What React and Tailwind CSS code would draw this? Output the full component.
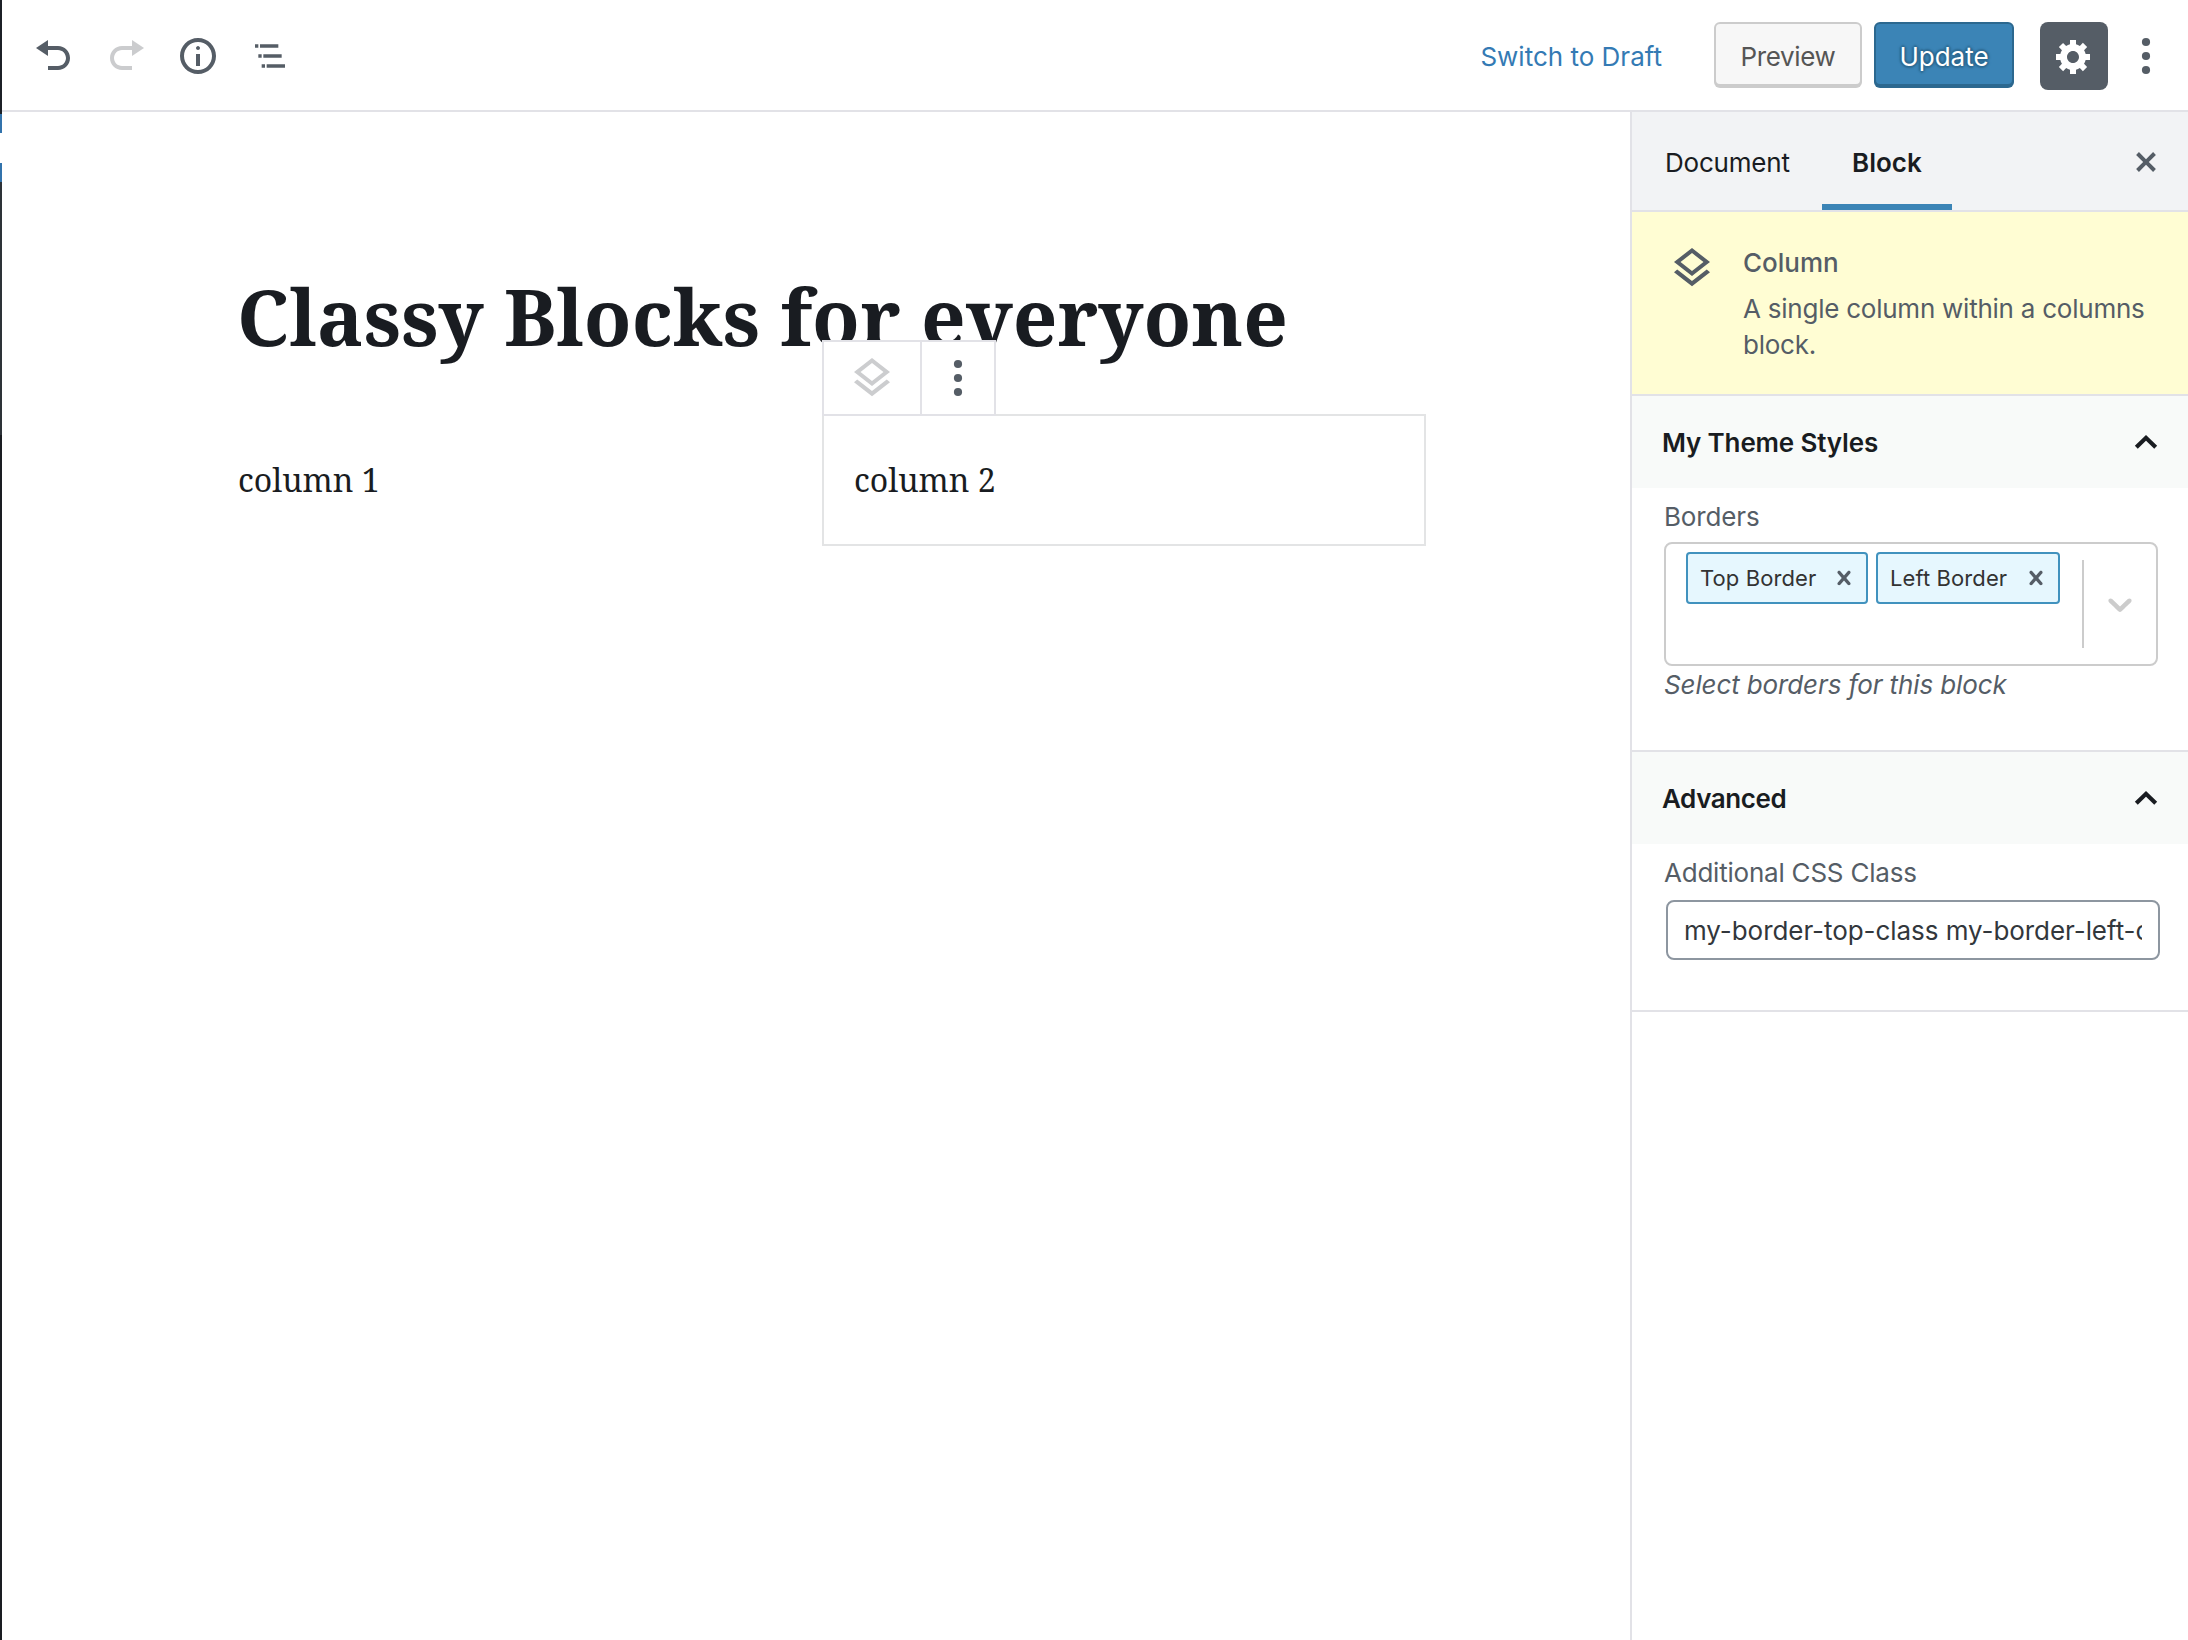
const ICONS = {
  undo: "M12 5H7V2L1 6l6 4V7h5c2.2 0 4 1.8 4 4s-1.8 4-4 4H7v2h5c3.3 0 6-2.7 6-6s-2.7-6-6-6z",
  redo: "M8 5h5V2l6 4-6 4V7H8c-2.2 0-4 1.8-4 4s1.8 4 4 4h5v2H8c-3.3 0-6-2.7-6-6s2.7-6 6-6z",
  info: "M9 15h2V9H9v6zm1-10c-.5 0-1 .5-1 1s.5 1 1 1 1-.5 1-1-.5-1-1-1zm0-4c-5 0-9 4-9 9s4 9 9 9 9-4 9-9-4-9-9-9zm0 16c-3.9 0-7-3.1-7-7s3.1-7 7-7 7 3.1 7 7-3.1 7-7 7z",
  outline: "M5 5H3v2h2V5zm3 8h11v-2H8v2zm9-8H6v2h11V5zM7 11H5v2h2v-2zm0 8h2v-2H7v2zm3-2v2h11v-2H10z",
  gear: "M18 12h-2.18c-.17.7-.44 1.35-.81 1.93l1.54 1.54-2.1 2.1-1.54-1.54c-.58.36-1.23.63-1.91.79V19H8v-2.18c-.68-.16-1.33-.43-1.91-.79l-1.54 1.54-2.12-2.12 1.54-1.54c-.36-.58-.63-1.23-.79-1.91H1V9.03h2.17c.16-.7.44-1.35.8-1.94L2.43 5.55l2.1-2.1 1.54 1.54c.58-.37 1.24-.64 1.93-.81V2h3v2.18c.68.16 1.33.43 1.91.79l1.54-1.54 2.12 2.12-1.54 1.54c.36.59.64 1.24.8 1.94H18V12zm-8.5 1.5c1.66 0 3-1.34 3-3s-1.34-3-3-3-3 1.34-3 3 1.34 3 3 3z",
  close: "M14.95 6.46L11.41 10l3.54 3.54-1.41 1.41L10 11.42l-3.53 3.53-1.42-1.42L8.58 10 5.05 6.47l1.42-1.42L10 8.58l3.54-3.53z",
  layers: "M11.99 18.54l-7.37-5.73L3 14.07l9 7 9-7-1.63-1.27zM12 16l7.36-5.73L21 9l-9-7-9 7 1.63 1.27L12 16zm0-11.47L17.74 9 12 13.47 6.26 9 12 4.53z",
  remove: "M14.348 14.849c-0.469 0.469-1.229 0.469-1.697 0l-2.651-3.030-2.651 3.029c-0.469 0.469-1.229 0.469-1.697 0-0.469-0.469-0.469-1.229 0-1.697l2.758-3.15-2.759-3.152c-0.469-0.469-0.469-1.228 0-1.697s1.228-0.469 1.697 0l2.652 3.031 2.651-3.031c0.469-0.469 1.228-0.469 1.697 0s0.469 1.229 0 1.697l-2.758 3.152 2.758 3.15c0.469 0.469 0.469 1.229 0 1.698z",
  down: "M4.516 7.548c0.436-0.446 1.043-0.481 1.576 0l3.908 3.747 3.908-3.747c0.533-0.481 1.141-0.446 1.574 0 0.436 0.445 0.408 1.197 0 1.615-0.406 0.418-4.695 4.502-4.695 4.502-0.217 0.223-0.502 0.335-0.787 0.335s-0.57-0.112-0.789-0.335c0 0-4.287-4.084-4.695-4.502s-0.436-1.17 0-1.615z",
};

function Icon({ name, box = 20, className = "size-10" }) {
  return (
    <svg viewBox={`0 0 ${box} ${box}`} fill="currentColor" className={`shrink-0 ${className}`}>
      <path d={ICONS[name]} />
    </svg>
  );
}

function Dots({ className = "" }) {
  return (
    <svg viewBox="0 0 40 40" fill="currentColor" className={`size-10 shrink-0 ${className}`}>
      <circle cx="20" cy="6" r="4.1" />
      <circle cx="20" cy="20" r="4.1" />
      <circle cx="20" cy="34" r="4.1" />
    </svg>
  );
}

function ChevronUp() {
  return (
    <svg viewBox="0 0 24 16" fill="none" stroke="currentColor" strokeWidth="4.2" className="h-4 w-6 shrink-0">
      <path d="M2.3 13.2 12 3.8l9.7 9.4" />
    </svg>
  );
}

function AdminEdge() {
  return (
    <div className="flex w-0.5 shrink-0 flex-col">
      <div className="h-[114px] bg-[#1c2026]" />
      <div className="h-[19px] bg-[#3273ac]" />
      <div className="h-[30px]" />
      <div className="h-[19px] bg-[#3273ac]" />
      <div className="h-[253px] bg-[#2d3238]" />
      <div className="grow bg-[#1a1d22]" />
    </div>
  );
}

function Header() {
  return (
    <header className="flex h-28 shrink-0 justify-between border-b-2 border-[#e2e2e7] pr-[22px] pl-8 text-[#555d66]">
      <div className="flex gap-8 pt-9">
        <Icon name="undo" />
        <Icon name="redo" className="size-10 text-[#cbccce]" />
        <Icon name="info" />
        <Icon name="outline" box={24} />
      </div>
      <div className="flex items-start pt-[22px]">
        <span className="mr-[52px] pt-[17px] text-[#347ab4]">Switch to Draft</span>
        <button className="mr-3 h-16 w-[148px] rounded-md border-2 border-[#cccccc] bg-[#f7f7f7] pt-[5px] tracking-[-0.35px] text-[#555555] shadow-[0_2px_0_#cccccc]">
          Preview
        </button>
        <button className="mr-[26px] h-16 w-[140px] rounded-md border-2 border-[#2c688f] bg-[#3b84b6] pt-[5px] text-white shadow-[0_2px_0_#2c688f] [text-shadow:0_-2px_2px_#2c688f,2px_0_2px_#2c688f,0_2px_2px_#2c688f,-2px_0_2px_#2c688f]">
          Update
        </button>
        <button className="flex size-[68px] justify-center rounded-lg bg-[#555d66] pt-3.5 text-white">
          <Icon name="gear" />
        </button>
        <Dots className="mt-3.5 ml-[18px]" />
      </div>
    </header>
  );
}

function Canvas() {
  return (
    <main className="grow pt-[150px] pl-[236px] font-['Noto_Serif',serif] text-[#191c21]">
      <h1 className="-ml-px h-[108px] text-[78px] leading-[108px] font-bold whitespace-nowrap">
        Classy Blocks for everyone
      </h1>
      <div className="mt-11 flex gap-[584px]">
        <div className="w-0 text-[32px] leading-[131px] whitespace-nowrap">column 1</div>
        <div className="relative h-[132px] w-[604px] border-2 border-[#e3e4e5] pl-[30px] text-[32px] leading-[127px]">
          column 2
          <div className="absolute -top-[76px] -left-0.5 flex h-[76px] w-[174px] border-2 border-[#e2e2e7] bg-white">
            <div className="flex w-24 justify-center pt-3 text-[#cccdcf]">
              <Icon name="layers" box={24} className="size-12" />
            </div>
            <div className="flex grow justify-center border-l-2 border-[#e2e2e7] pt-4 text-[#555d66]">
              <Dots />
            </div>
          </div>
        </div>
      </div>
    </main>
  );
}

function PanelTitle({ children, className = "" }) {
  return (
    <div className="flex h-[94px] items-center justify-between border-t-2 border-[#e2e2e7] bg-[#f8faf9] pr-[30px] pl-[30px] font-semibold text-[#191c21]">
      <span className={`pt-0.5 ${className}`}>{children}</span>
      <ChevronUp />
    </div>
  );
}

function Chip({ label, className }) {
  return (
    <div className={`flex h-[52px] items-center justify-between rounded border-2 border-[#4192be] bg-[#e6f7fe] pr-2 pl-3 text-[22px] tracking-[0.1px] text-[#333333] ${className}`}>
      {label}
      <Icon name="remove" className="size-7 text-[#555d66]" />
    </div>
  );
}

function Sidebar() {
  return (
    <aside className="flex w-[558px] shrink-0 flex-col border-l-2 border-[#e2e2e7] text-[#555d66]">
      <div className="flex h-[100px] items-stretch border-b-2 border-[#e2e2e7] bg-[#f2f3f5] pr-[22px] text-[#191c21]">
        <div className="flex w-[190px] items-center pt-[3px] pl-[33px] tracking-[-0.2px]">Document</div>
        <div className="flex w-[130px] items-center border-b-6 border-[#3b84b6] pt-[9px] pl-[30px] font-semibold">Block</div>
        <div className="ml-auto flex items-center pt-0.5 text-[#555d66]">
          <Icon name="close" />
        </div>
      </div>
      <div className="flex h-[182px] bg-[#fffdd3] pt-8 pl-9">
        <Icon name="layers" box={24} className="size-12" />
        <div className="pt-px pl-[27px]">
          <div className="leading-9 font-medium">Column</div>
          <div className="mt-2.5 w-[420px] leading-9 tracking-[-0.24px]">A single column within a columns block.</div>
        </div>
      </div>

      <PanelTitle className="tracking-[-0.15px]">My Theme Styles</PanelTitle>
      <div className="h-[262px] pt-[11px] pl-8">
        <div className="leading-9 tracking-[-0.15px]">Borders</div>
        <div className="mt-[7px] flex h-[124px] w-[494px] rounded-lg border-2 border-[#cccccc]">
          <div className="flex grow gap-2 pt-2 pl-5">
            <Chip label="Top Border" className="w-[182px]" />
            <Chip label="Left Border" className="w-[184px]" />
          </div>
          <div className="my-4 w-0.5 bg-[#cccccc]" />
          <div className="flex w-[72px] items-center justify-center text-[#cccccc]">
            <Icon name="down" />
          </div>
        </div>
        <div className="mt-px leading-9 tracking-[-0.12px] italic">Select borders for this block</div>
      </div>

      <PanelTitle className="tracking-[-0.4px]">Advanced</PanelTitle>
      <div className="h-[168px] border-b-2 border-[#e2e2e7] pt-[11px] pl-8">
        <div className="leading-9 tracking-[-0.22px]">Additional CSS Class</div>
        <input
          readOnly
          value="my-border-top-class my-border-left-class"
          className="mt-[9px] ml-0.5 block h-[60px] w-[494px] rounded-lg border-2 border-[#8d96a0] px-4 pt-px tracking-[-0.06px] text-[#32373c]"
        />
      </div>
    </aside>
  );
}

export default function App() {
  return (
    <div className="flex h-[1640px] w-[2188px] overflow-hidden bg-white font-[Inter,sans-serif] text-[26px] leading-9">
      <AdminEdge />
      <div className="flex grow flex-col">
        <Header />
        <div className="flex grow">
          <Canvas />
          <Sidebar />
        </div>
      </div>
    </div>
  );
}
